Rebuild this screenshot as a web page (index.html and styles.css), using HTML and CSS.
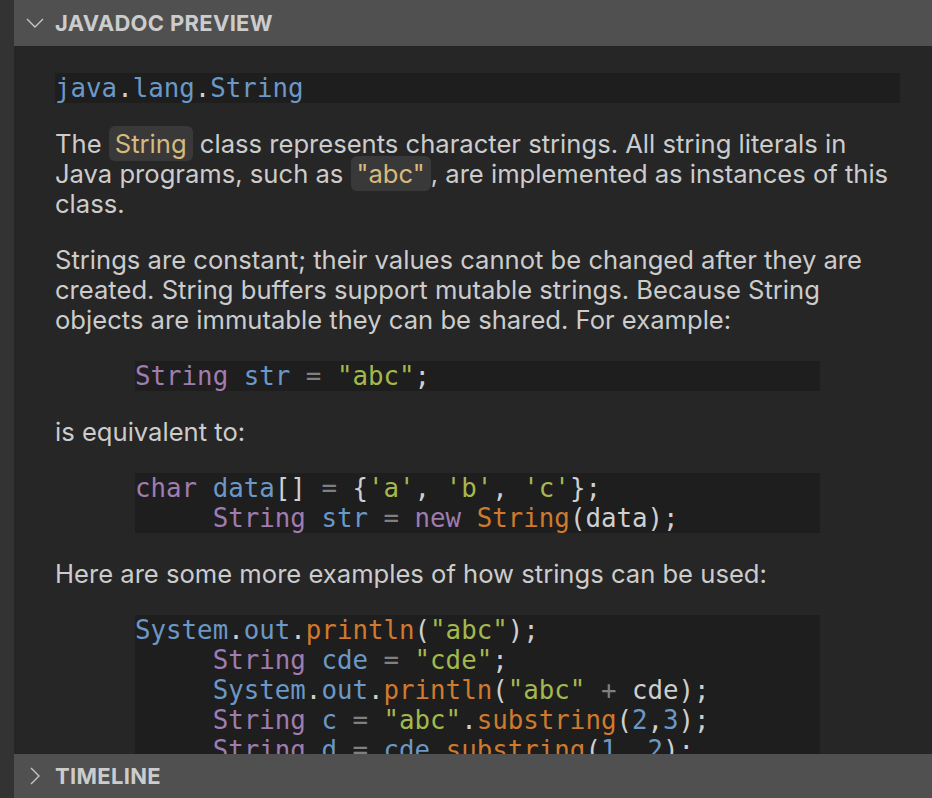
FILE: index.html
```html
<!DOCTYPE html>
<html>
<head>
<meta charset="utf-8">
<link rel="stylesheet" href="styles.css">
</head>
<body>
<div class="panel">
  <div class="section-header">
    <svg class="chev" width="20" height="20" viewBox="0 0 20 20"><path d="M2 6 L10 14 L18 6" fill="none" stroke="#c5c5c5" stroke-width="1.4"/></svg>
    <span class="title">JAVADOC PREVIEW</span>
  </div>
  <div class="content">
    <pre class="sig"><span class="b">java</span>.<span class="b">lang</span>.<span class="b">String</span></pre>
    <p>The <code class="inl">String</code> class represents character strings. All string literals in Java programs, such as <code class="inl">"abc"</code>, are implemented as instances of this class.</p>
    <p>Strings are constant; their values cannot be changed after they are created. String buffers support mutable strings. Because String objects are immutable they can be shared. For example:</p>
    <pre class="ex"><span class="p">String</span> <span class="b">str</span> <span class="o">=</span> <span class="g">"abc"</span>;</pre>
    <p>is equivalent to:</p>
    <pre class="ex"><span class="p">char</span> <span class="b">data</span>[] <span class="o">=</span> {<span class="g">'a'</span>, <span class="g">'b'</span>, <span class="g">'c'</span>};
     <span class="p">String</span> <span class="b">str</span> <span class="o">=</span> <span class="p">new</span> <span class="r">String</span>(data);</pre>
    <p>Here are some more examples of how strings can be used:</p>
    <pre class="ex"><span class="b">System</span>.<span class="b">out</span>.<span class="r">println</span>(<span class="g">"abc"</span>);
     <span class="p">String</span> <span class="b">cde</span> <span class="o">=</span> <span class="g">"cde"</span>;
     <span class="b">System</span>.<span class="b">out</span>.<span class="r">println</span>(<span class="g">"abc"</span> <span class="o">+</span> cde);
     <span class="p">String</span> <span class="b">c</span> <span class="o">=</span> <span class="g">"abc"</span>.<span class="r">substring</span>(<span class="b">2</span>,<span class="b">3</span>);
     <span class="p">String</span> <span class="b">d</span> <span class="o">=</span> <span class="b">cde</span>.<span class="r">substring</span>(<span class="b">1</span>, <span class="b">2</span>);
     <span class="p">String</span> <span class="b">s</span> <span class="o">=</span> <span class="b">cde</span>.<span class="r">toUpperCase</span>();</pre>
  </div>
  <div class="section-header bottom">
    <svg class="chev" width="20" height="20" viewBox="0 0 20 20"><path d="M6 2 L14 10 L6 18" fill="none" stroke="#c5c5c5" stroke-width="1.4"/></svg>
    <span class="title">TIMELINE</span>
  </div>
</div>
</body>
</html>
```
FILE: styles.css
```css
html, body {
  margin: 0;
  padding: 0;
  height: 100%;
  background: #333333;
  overflow: hidden;
}
.panel {
  margin-left: 14px;
  height: 798px;
  display: flex;
  flex-direction: column;
  background: #262626;
}
.section-header {
  flex: none;
  height: 46px;
  background: #505050;
  display: flex;
  align-items: center;
  padding-left: 11px;
  gap: 10px;
  color: #cccccc;
  font-family: Inter, "Liberation Sans", sans-serif;
  font-weight: 700;
  font-size: 22px;
  letter-spacing: 0.3px;
}
.section-header.bottom {
  height: 44px;
}
.chev { flex: none; }
.content {
  flex: 1;
  overflow: hidden;
  padding: 27px 32px 0 41px;
  font-family: Inter, "Liberation Sans", sans-serif;
  font-size: 25.6px;
  line-height: 30px;
  color: #cccccc;
}
p {
  margin: 26px 0;
}
pre {
  margin: 0;
  background: #1e1e1e;
  font-family: "DejaVu Sans Mono", monospace;
  font-size: 25.8px;
  line-height: 30px;
  color: #cfcfcf;
  white-space: pre;
}
pre.ex {
  margin: 26px 80px;
}
.inl {
  font-family: inherit;
  background: #393939;
  color: #d7ba7d;
  border-radius: 6px;
  padding: 2px 6px;
}
.b { color: #6b98c6; }
.p { color: #a07cb0; }
.g { color: #a4b84c; }
.r { color: #d07a2e; }
.o { color: #808080; }
```
